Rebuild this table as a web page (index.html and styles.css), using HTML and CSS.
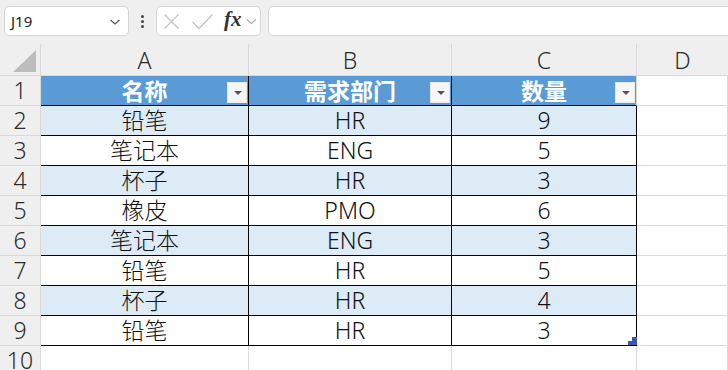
FILE: index.html
```html
<!DOCTYPE html>
<html lang="zh">
<head>
<meta charset="utf-8">
<link rel="stylesheet" href="styles.css">
</head>
<body>
<div class="topbar">
  <div class="namebox">
    <span class="ref">J19</span>
    <svg class="chev" width="12" height="8" viewBox="0 0 12 8"><path d="M1.5 2 L6 6 L10.5 2" fill="none" stroke="#555" stroke-width="1.3"/></svg>
  </div>
  <div class="dots"><i></i><i></i><i></i></div>
  <div class="fxbox">
    <svg class="ico" width="17" height="17" viewBox="0 0 17 17"><path d="M1.5 1.5 L15.5 15.5 M15.5 1.5 L1.5 15.5" stroke="#c4c4c4" stroke-width="1.4" fill="none"/></svg>
    <svg class="ico" width="23" height="17" viewBox="0 0 23 17"><path d="M1.5 9 L8 15.5 L21.5 1.5" stroke="#c4c4c4" stroke-width="1.4" fill="none"/></svg>
    <span class="fx">fx</span>
    <svg class="chev2" width="11" height="7" viewBox="0 0 11 7"><path d="M1 1.5 L5.5 5.5 L10 1.5" fill="none" stroke="#aaa" stroke-width="1.2"/></svg>
  </div>
  <div class="formula"></div>
</div>
<div class="sheet">
  <div class="corner"><svg width="24" height="22" viewBox="0 0 24 22"><polygon points="23,0 23,22 0,22" fill="#bdbdbd"/></svg></div>
  <div class="colhead">A</div>
  <div class="colhead">B</div>
  <div class="colhead">C</div>
  <div class="colhead last">D</div>

  <div class="rowhead">1</div>
  <div class="cell th">名称<span class="filter"></span></div>
  <div class="cell th">需求部门<span class="filter"></span></div>
  <div class="cell th end">数量<span class="filter"></span></div>
  <div class="blank"></div>

  <div class="rowhead">2</div>
  <div class="cell band">铅笔</div>
  <div class="cell band">HR</div>
  <div class="cell band end">9</div>
  <div class="blank"></div>

  <div class="rowhead">3</div>
  <div class="cell">笔记本</div>
  <div class="cell">ENG</div>
  <div class="cell end">5</div>
  <div class="blank"></div>

  <div class="rowhead">4</div>
  <div class="cell band">杯子</div>
  <div class="cell band">HR</div>
  <div class="cell band end">3</div>
  <div class="blank"></div>

  <div class="rowhead">5</div>
  <div class="cell">橡皮</div>
  <div class="cell">PMO</div>
  <div class="cell end">6</div>
  <div class="blank"></div>

  <div class="rowhead">6</div>
  <div class="cell band">笔记本</div>
  <div class="cell band">ENG</div>
  <div class="cell band end">3</div>
  <div class="blank"></div>

  <div class="rowhead">7</div>
  <div class="cell">铅笔</div>
  <div class="cell">HR</div>
  <div class="cell end">5</div>
  <div class="blank"></div>

  <div class="rowhead">8</div>
  <div class="cell band">杯子</div>
  <div class="cell band">HR</div>
  <div class="cell band end">4</div>
  <div class="blank"></div>

  <div class="rowhead">9</div>
  <div class="cell">铅笔</div>
  <div class="cell">HR</div>
  <div class="cell end">3<svg class="resize" width="9" height="8" viewBox="0 0 9 8"><polygon points="9,0 9,8 0,8 0,4 4,4 4,0" fill="#3c57a8"/></svg></div>
  <div class="blank"></div>

  <div class="rowhead">10</div>
  <div class="blank"></div>
  <div class="blank"></div>
  <div class="blank"></div>
  <div class="blank"></div>
</div>
</body>
</html>
```

FILE: styles.css
```css
html, body {
  margin: 0;
  padding: 0;
  background: #ffffff;
  overflow: hidden;
  font-family: "Noto Sans CJK SC", "Noto Sans", sans-serif;
}

.topbar {
  height: 44px;
  background: #efefef;
  display: flex;
  align-items: flex-start;
  padding: 6px 0 0 4px;
  box-sizing: border-box;
}

.namebox {
  width: 125px;
  height: 30px;
  box-sizing: border-box;
  background: #fff;
  border: 1px solid #d6d6d6;
  border-radius: 5px;
  display: flex;
  align-items: center;
  justify-content: space-between;
  padding: 0 7px 0 6px;
}

.ref {
  font-family: "Noto Sans", sans-serif;
  font-size: 15px;
  color: #222;
}

.chev { margin-top: 1px; }

.dots {
  width: 27px;
  height: 30px;
  display: flex;
  flex-direction: column;
  align-items: center;
  justify-content: center;
  gap: 2px;
}

.dots i {
  display: block;
  width: 3px;
  height: 3px;
  background: #444;
  border-radius: 50%;
}

.fxbox {
  width: 105px;
  height: 30px;
  box-sizing: border-box;
  background: #fff;
  border: 1px solid #d6d6d6;
  border-radius: 5px;
  display: flex;
  align-items: center;
  padding: 0 0 0 6px;
}

.fxbox .ico:nth-child(2) { margin-left: 11px; }

.fx {
  font-family: "Liberation Serif", serif;
  font-style: italic;
  font-weight: bold;
  font-size: 21px;
  color: #333;
  margin-left: 10px;
  line-height: 1;
  margin-top: -3px;
}

.chev2 { margin-left: 4px; }

.formula {
  flex: 1;
  margin-left: 7px;
  margin-right: -10px;
  height: 30px;
  box-sizing: border-box;
  background: #fff;
  border: 1px solid #d6d6d6;
  border-radius: 5px;
}

.sheet {
  display: grid;
  grid-template-columns: 41px 208px 203px 185px 1fr;
  grid-template-rows: 32px repeat(10, 30px);
}

.sheet > div {
  box-sizing: border-box;
  border-right: 1px solid #d9d9d9;
  border-bottom: 1px solid #d9d9d9;
  display: flex;
  align-items: center;
  justify-content: center;
  position: relative;
  line-height: 1;
}

.corner {
  background: #efefef;
  justify-content: flex-end !important;
  align-items: flex-end !important;
  padding: 0 3px 3px 0;
}

.colhead {
  background: #efefef;
  font-family: "Noto Sans", sans-serif;
  font-weight: 300;
  font-size: 23px;
  color: #2b2b2b;
  padding-top: 2px;
}

.sheet > .colhead.last { border-right: none; }

.rowhead {
  background: #efefef;
  font-family: "Noto Sans", sans-serif;
  font-weight: 300;
  font-size: 23px;
  color: #2b2b2b;
}

.sheet > .cell {
  font-family: "Noto Sans", "Noto Sans CJK SC", sans-serif;
  font-weight: 300;
  font-size: 23px;
  color: #111;
  border-right-color: #000;
  border-bottom-color: #000;
}

.sheet > .th {
  font-family: "Noto Sans CJK SC", sans-serif;
  background: #5b9bd5;
  color: #fff;
  font-weight: bold;
}

.sheet > .th.end { border-right-color: #d9d9d9; }

.band { background: #ddebf7; }

.filter {
  position: absolute;
  right: 1px;
  top: 6px;
  width: 20px;
  height: 21px;
  background: #f6f6f6;
  box-sizing: border-box;
  border: 1px solid #e8e8e8;
}

.filter::after {
  content: "";
  position: absolute;
  left: 6px;
  top: 8px;
  border-left: 4px solid transparent;
  border-right: 4px solid transparent;
  border-top: 4px solid #555;
}

.resize {
  position: absolute;
  right: -1px;
  bottom: 0;
}

.blank { background: #fff; }
```
